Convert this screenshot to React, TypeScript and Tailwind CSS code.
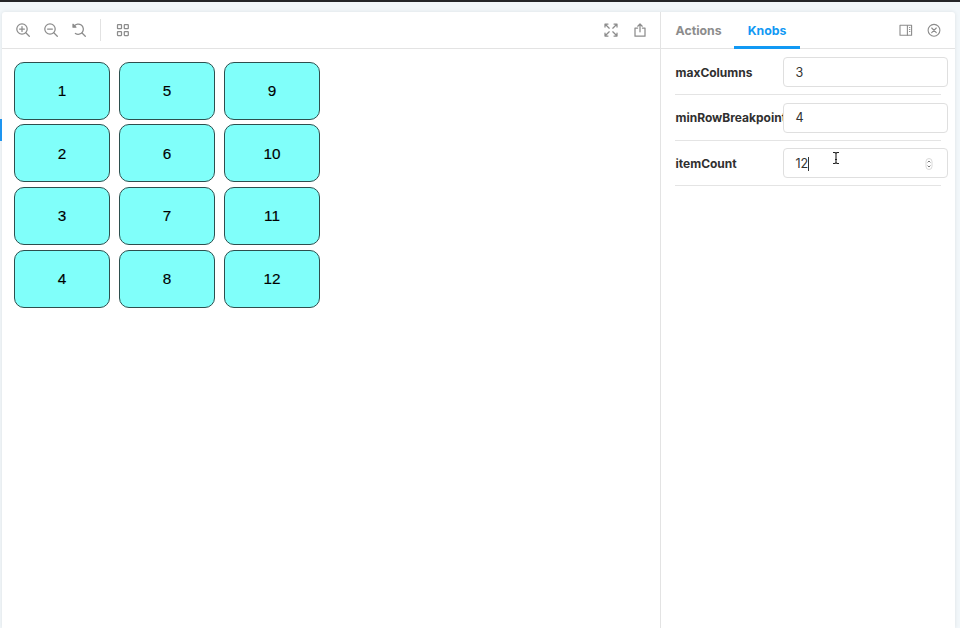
import React from 'react';

type IconProps = { className?: string; children: React.ReactNode };

function Icon({ className = '', children }: IconProps) {
  return (
    <svg
      viewBox="0 0 14 14"
      className={`block h-[14px] w-[14px] shrink-0 ${className}`}
      fill="none"
      stroke="#8c8c8c"
      strokeWidth="1.25"
      strokeLinecap="round"
      strokeLinejoin="round"
    >
      {children}
    </svg>
  );
}

function Toolbar() {
  return (
    <div className="flex h-[37px] shrink-0 items-center border-b border-[#e3e3e3] pl-[13.5px] pr-[13.5px]">
      <Icon>
        <circle cx="6" cy="6" r="5.2" />
        <path d="M9.8 9.8 13.3 13.3M6 3.6v4.8M3.6 6h4.8" />
      </Icon>
      <Icon className="ml-[14.7px]">
        <circle cx="6" cy="6" r="5.2" />
        <path d="M9.8 9.8 13.3 13.3M3.6 6h4.8" />
      </Icon>
      <Icon className="ml-[13.8px]">
        <path d="M2.2 3A5.1 5.1 0 1 1 3.4 10.4M9.8 9.8 13.3 13.3" />
        <path d="M1 1.3v2.9h2.9z" fill="#8c8c8c" />
      </Icon>
      <div className="ml-[14px] h-[22px] w-px bg-[#e2e2e2]" />
      <Icon className="ml-[15px]">
        <rect x="1.5" y="1.7" width="4" height="4" rx=".5" />
        <rect x="8.3" y="1.7" width="4" height="4" rx=".5" />
        <rect x="1.5" y="8.5" width="4" height="4" rx=".5" />
        <rect x="8.3" y="8.5" width="4" height="4" rx=".5" />
      </Icon>
      <Icon className="ml-auto">
        <path d="M1 4V1h3M10 1h3v3M13 10v3h-3M4 13H1v-3M1.2 1.2 5.2 5.2M12.8 1.2 8.8 5.2M12.8 12.8 8.8 8.8M1.2 12.8 5.2 8.8" />
      </Icon>
      <Icon className="ml-[14.5px]">
        <path d="M4.6 5H2v8.2h10V5H9.4M7 8.8V1.2M4.8 3.2 7 1l2.2 2.2" />
      </Icon>
    </div>
  );
}

function Canvas() {
  return (
    <div className="grid w-fit auto-cols-[96px] grid-flow-col grid-rows-[repeat(4,58px)] gap-x-[9px] gap-y-[4.8px] pl-3 pt-[12.6px]">
      {Array.from({ length: 12 }, (_, i) => (
        <div
          key={i}
          className="flex items-center justify-center rounded-[10px] border border-[#2d4f4e] bg-[#80fffa] pb-[0.4px] font-['Liberation_Sans',sans-serif] text-[15.3px] leading-none text-black [-webkit-text-stroke:0.15px_#000]"
        >
          {i + 1}
        </div>
      ))}
    </div>
  );
}

function Tabs() {
  return (
    <div className="flex h-[37px] shrink-0 border-b border-[#e3e3e3] pl-[14px] pr-[14px] text-[12.3px] font-bold">
      <div className="flex w-[59px] items-center pl-[0.5px] pt-[3px] text-[#8c8c8c]">Actions</div>
      <div className="-mb-px flex w-[66px] items-center justify-center border-b-[3px] border-[#1299f4] pt-[5px] text-[#1299f4]">
        Knobs
      </div>
      <div className="ml-auto flex items-center">
        <Icon>
          <rect x="1" y="2.3" width="11.6" height="10" strokeWidth="1.1" />
          <path d="M8.4 2.5v9.6M10.5 4.5h.4M10.5 6.5h.4M10.5 8.5h.4" strokeWidth="1.1" />
        </Icon>
        <Icon className="ml-[14px]">
          <circle cx="7" cy="7.3" r="5.9" strokeWidth="1.1" />
          <path d="m4.7 5 4.6 4.6M9.3 5 4.7 9.6" strokeWidth="1.1" />
        </Icon>
      </div>
    </div>
  );
}

type KnobProps = { name: string; value: string; active?: boolean };

function Knob({ name, value, active }: KnobProps) {
  return (
    <div className="mr-[14px] flex h-[45.7px] items-center border-b border-[#e4e4e4] pt-[0.6px]">
      <label className="w-[108px] shrink-0 overflow-hidden whitespace-nowrap pl-[0.5px] pt-px text-[12px] font-bold text-[#303030]">
        {name}
      </label>
      <div className="-mr-[7px] flex h-[30px] w-[165px] shrink-0 items-center rounded-[4px] border border-[#dfdfdf] bg-white pl-[11.5px] pr-[14px] pt-[2px] text-[12.6px] text-[#333]">
        <span>{value}</span>
        {active && (
          <>
            <span className="-ml-[0.5px] h-[14px] w-px bg-[#333]" />
            <svg viewBox="0 0 8 12" className="-mt-px ml-auto h-[12px] w-[8px]" fill="none">
              <rect x="1" y=".5" width="6" height="11" rx="3" stroke="#d0d0d0" strokeWidth=".8" />
              <path d="m2.6 4.4 1.4-1.4 1.4 1.4M2.6 7.6 4 9l1.4-1.4" stroke="#777" />
            </svg>
          </>
        )}
      </div>
    </div>
  );
}

export default function App() {
  return (
    <div className="relative flex h-[628px] w-[960px] flex-col overflow-hidden border-t-2 border-[#252629] bg-[#f2f7fa] font-[Inter,sans-serif]">
      <div className="ml-[2px] mt-[10px] flex w-[953px] flex-1 rounded-t-[3px] bg-white shadow-[0_0_4px_rgba(0,0,0,0.09)]">
        <main className="flex w-[658px] flex-col">
          <Toolbar />
          <Canvas />
        </main>
        <aside className="flex w-[295px] flex-col border-l border-[#e3e3e3]">
          <Tabs />
          <div className="flex flex-col pl-[14px] pt-[0.4px]">
            <Knob name="maxColumns" value="3" />
            <Knob name="minRowBreakpoint" value="4" />
            <Knob name="itemCount" value="12" active />
          </div>
        </aside>
      </div>
      <div className="absolute left-0 top-[117px] h-[22px] w-[2px] bg-[#1e95f0]" />
      <svg
        viewBox="0 0 8 14"
        className="absolute left-[832px] top-[149px] h-[14px] w-[8px]"
        fill="none"
        stroke="#222"
        strokeWidth="1.1"
      >
        <path d="M1 1.5h2l1 1 1-1h2M4 2.5v9M1 12.5h2l1-1 1 1h2M3 8.5h2" />
      </svg>
    </div>
  );
}
